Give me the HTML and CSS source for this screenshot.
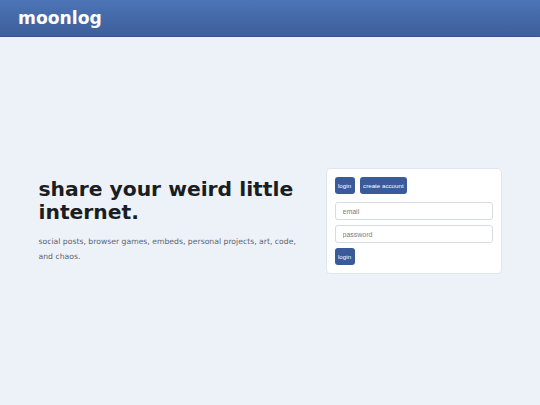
FILE: index.html
```html
<!DOCTYPE html>
<html>
<head>
<meta charset="utf-8">
<link rel="stylesheet" href="styles.css">
</head>
<body>
<header class="topbar"><span class="brand">moonlog</span></header>
<main class="main">
  <div class="wrap">
    <section class="hero">
      <h1 class="title">share your weird little internet.</h1>
      <p class="lede">social posts, browser games, embeds, personal projects, art, code, and chaos.</p>
    </section>
    <section class="card">
      <div class="tabs">
        <button class="btn">login</button>
        <button class="btn">create account</button>
      </div>
      <input class="field field-first" type="text" placeholder="email">
      <input class="field" type="password" placeholder="password">
      <button class="btn">login</button>
    </section>
  </div>
</main>
</body>
</html>
```
FILE: styles.css
```css
html, body {
  margin: 0;
  padding: 0;
}
body {
  background: #edf2f8;
  font-family: "DejaVu Sans", Verdana, sans-serif;
  color: #1c1f24;
}
.topbar {
  height: 36px;
  background: linear-gradient(#4c74b6, #3e5f9a);
  border-bottom: 1px solid #34548a;
  display: flex;
  align-items: center;
  padding-left: 18px;
}
.brand {
  color: #ffffff;
  font-weight: bold;
  font-size: 17.2px;
}
.main {
  height: 368px;
  display: flex;
  align-items: center;
  justify-content: center;
}
.wrap {
  width: 463px;
  display: grid;
  grid-template-columns: 1fr 176px;
  gap: 24px;
  align-items: center;
}
.title {
  margin: 0;
  font-size: 20.3px;
  line-height: 23px;
  font-weight: bold;
  color: #1a1d22;
}
.lede {
  margin: 10px 0 0;
  font-size: 7.7px;
  line-height: 15px;
  color: #5c6470;
}
.card {
  box-sizing: border-box;
  background: #ffffff;
  border: 1px solid #dfe5ee;
  border-radius: 4px;
  padding: 8px;
  display: flex;
  flex-direction: column;
  align-items: flex-start;
}
.tabs {
  display: flex;
  gap: 5px;
}
.btn {
  height: 17px;
  padding: 0 3.5px;
  border: none;
  border-radius: 3px;
  background: #3a5a9a;
  color: #ffffff;
  font-family: "Liberation Sans", Arial, sans-serif;
  font-size: 6.2px;
}
.field {
  box-sizing: border-box;
  width: 100%;
  height: 18px;
  margin: 0 0 5px;
  padding: 0 7px;
  border: 1px solid #d6dce5;
  border-radius: 3px;
  background: #ffffff;
  font-family: "Liberation Sans", Arial, sans-serif;
  font-size: 7px;
  outline: none;
}
.field::placeholder {
  color: #777d86;
}
.field-first {
  margin-top: 8px;
}
```
